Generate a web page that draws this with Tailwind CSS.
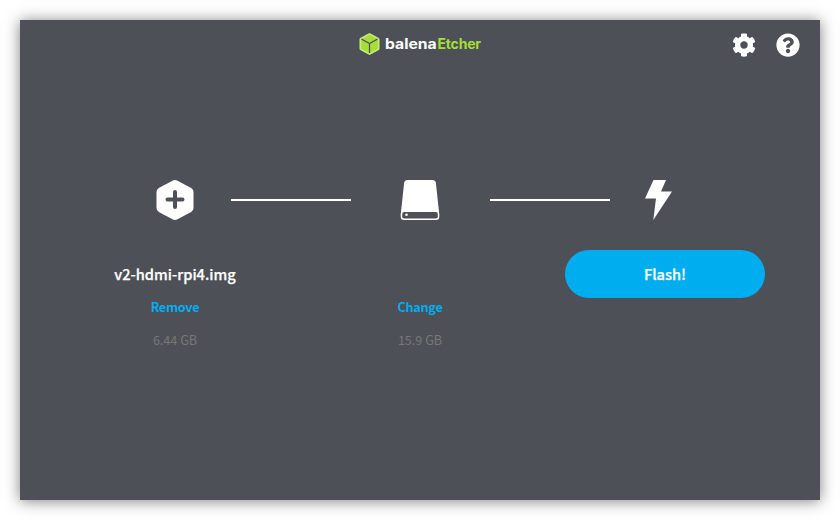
<!DOCTYPE html>
<html lang="en">
<head>
<meta charset="utf-8">
<title>balenaEtcher</title>
<script src="https://cdn.jsdelivr.net/npm/@tailwindcss/browser@4"></script>
</head>
<body class="bg-white p-5 w-[840px] h-[520px] overflow-hidden font-['Noto_Sans_CJK_SC','Noto_Sans',sans-serif]">
<main class="w-[800px] h-[480px] bg-[#4d5057] shadow-[0_1px_14px_rgba(0,0,0,0.5)] flex flex-col">
  <header class="h-[50px] grid grid-cols-[1fr_auto_1fr] items-center pl-5 pr-5 shrink-0">
    <span></span>
    <div class="flex items-center h-6 gap-[5px] -translate-y-px">
      <svg class="w-[21px] h-[22px]" viewBox="0 0 21 22">
        <path d="M10.5.5 20 5.6v10.8l-9.5 5.1L1 16.400V5.600Z" fill="#c6ec73" stroke="#c6ec73" stroke-linejoin="round"/>
        <path d="M10.500 1.800 18 5.800 10.500 9.800 3 5.800Z" fill="#a5de37"/>
        <path d="M2.200 7.200 9.800 11.300V19.800L2.200 15.700ZM18.800 7.200 11.200 11.300V19.800L18.800 15.700Z" fill="#a5de37"/>
        <path d="M2.500 6.100 10.500 10.500 18.500 6.100M10.500 10.500V20" fill="none" stroke="#4d5057" stroke-width="1.300"/>
      </svg>
      <div class="w-[97px] whitespace-nowrap font-['Inter',sans-serif] font-bold text-[14px] leading-5 text-white flex"><span class="w-[53px]"><span class="inline-block origin-left scale-x-[1.120]">balena</span></span><span class="text-[#a5de37] tracking-[-0.200px]">Etcher</span></div>
    </div>
    <div class="flex justify-end items-center gap-5 text-white">
      <svg class="w-6 h-6" viewBox="0 0 512 512" fill="currentColor"><path d="M487.400 315.700l-42.600-24.600c4.300-23.200 4.300-47 0-70.200l42.600-24.600c4.900-2.800 7.100-8.600 5.500-14-11.100-35.600-30-67.800-54.700-94.600-3.800-4.100-10-5.100-14.800-2.300L380.800 110c-17.900-15.400-38.500-27.300-60.800-35.100V25.800c0-5.600-3.900-10.500-9.400-11.700-36.700-8.200-74.300-7.800-109.200 0-5.500 1.200-9.400 6.100-9.400 11.700V75c-22.200 7.900-42.800 19.800-60.800 35.100L88.700 85.500c-4.900-2.800-11-1.900-14.800 2.300-24.700 26.700-43.600 58.900-54.700 94.600-1.700 5.400.6 11.200 5.500 14L67.300 221c-4.300 23.200-4.300 47 0 70.200l-42.600 24.600c-4.900 2.800-7.100 8.600-5.500 14 11.100 35.600 30 67.800 54.700 94.600 3.800 4.100 10 5.100 14.800 2.300l42.600-24.600c17.900 15.400 38.500 27.300 60.800 35.100v49.200c0 5.600 3.900 10.500 9.400 11.700 36.700 8.200 74.300 7.800 109.200 0 5.500-1.200 9.400-6.100 9.400-11.700v-49.200c22.200-7.900 42.800-19.800 60.800-35.100l42.600 24.600c4.900 2.800 11 1.900 14.800-2.300 24.700-26.700 43.600-58.900 54.700-94.600 1.500-5.500-.7-11.300-5.600-14.100zM256 336c-44.100 0-80-35.900-80-80s35.900-80 80-80 80 35.900 80 80-35.900 80-80 80z"/></svg>
      <svg class="w-6 h-6" viewBox="0 0 512 512" fill="currentColor"><path d="M504 256c0 136.997-111.043 248-248 248S8 392.997 8 256C8 119.083 119.043 8 256 8s248 111.083 248 248zM262.655 90c-54.497 0-89.255 22.957-116.549 63.758-3.536 5.286-2.353 12.415 2.715 16.258l34.699 26.310c5.205 3.947 12.621 3.008 16.665-2.122 17.864-22.658 30.113-35.797 57.303-35.797 20.429 0 45.698 13.148 45.698 32.958 0 14.976-12.363 22.667-32.534 33.976C247.128 238.528 216 254.941 216 296v4c0 6.627 5.373 12 12 12h56c6.627 0 12-5.373 12-12v-1.333c0-28.462 83.186-29.647 83.186-106.667 0-58.002-60.165-102-116.531-102zM256 338c-25.365 0-46 20.635-46 46 0 25.364 20.635 46 46 46s46-20.636 46-46c0-25.365-20.635-46-46-46z"/></svg>
    </div>
  </header>
  <section class="pt-[110px] px-[55px] text-white">
    <div class="flex items-center h-10 pl-20">
      <svg class="w-10 h-10" viewBox="0 0 40 40"><path d="M17.500.700Q20-.600 22.500.700L36.200 8.100Q38.500 9.500 38.500 12V28Q38.500 30.500 36.200 31.900L22.500 39.300Q20 40.600 17.500 39.300L3.800 31.900Q1.500 30.500 1.500 28V12Q1.500 9.500 3.800 8.100Z" fill="white"/><path d="M20 12V27M12.500 19.500H27.500" stroke="#4d5057" stroke-width="4" stroke-linecap="round"/></svg>
      <div class="w-[120px] h-0.5 bg-white ml-9"></div>
      <svg class="w-10 h-10 ml-[49px]" viewBox="0 0 40 40"><path d="M7.200 0H32.800Q35.500 0 35.800 2.500L39.300 34.500V36.500Q39.300 40 35.800 40H4.200Q.7 40 .7 36.500V34.500L4.200 2.500Q4.500 0 7.200 0Z" fill="white"/><rect x="2.200" y="32" width="35.600" height="6.600" rx="2" fill="#4d5057"/><circle cx="6.500" cy="34.700" r="1.300" fill="white"/></svg>
      <div class="w-[120px] h-0.5 bg-white ml-[50px]"></div>
      <svg class="w-7 h-10 ml-[34px]" viewBox="0 0 28 40"><path d="M9.500 0H22L17 11.500H28L9.300 40 12 18.500H1Z" fill="white"/></svg>
    </div>
    <div class="mt-[30px] grid grid-cols-[200px_290px_200px] h-[110px]">
      <div class="flex flex-col items-center">
        <div class="h-12 leading-[48px] text-[14.600px] font-medium [-webkit-text-stroke:0.250px_currentColor]">v2-hdmi-rpi4.img</div>
        <button class="h-[18px] leading-[18px] text-[12.600px] font-bold tracking-[-0.250px] text-[#00aeef]">Remove</button>
        <div class="mt-[15px] h-[18px] leading-[18px] text-[12.600px] text-[#777777]">6.44 GB</div>
      </div>
      <div class="flex flex-col items-center pt-12">
        <button class="h-[18px] leading-[18px] text-[12.600px] font-bold tracking-[-0.250px] text-[#00aeef]">Change</button>
        <div class="mt-[15px] h-[18px] leading-[18px] text-[12.600px] text-[#777777]">15.9 GB</div>
      </div>
      <button class="w-[200px] h-12 rounded-full bg-[#00aeef] text-[14.600px] font-medium [-webkit-text-stroke:0.250px_currentColor]">Flash!</button>
    </div>
  </section>
</main>
</body>
</html>
